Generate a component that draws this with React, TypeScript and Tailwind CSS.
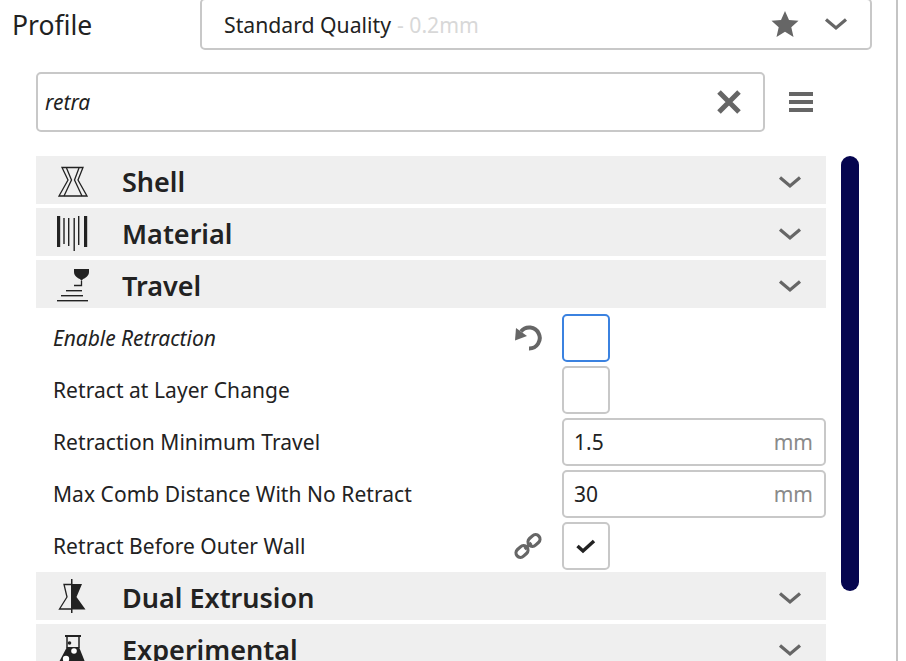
import React from 'react';

const font = { fontFamily: '"Noto Sans", sans-serif' };

const Chevron = ({ className = '' }: { className?: string }) => (
  <svg width="24" height="14" viewBox="0 0 24 14" className={className}>
    <path d="M2 2.500 L12 11 L22 2.500" fill="none" stroke="#666" strokeWidth="3.200" />
  </svg>
);

const ShellIcon = () => (
  <svg width="32" height="36" viewBox="0 0 32 36" fill="none" stroke="#222" strokeWidth="1.300" className="mt-[3px]">
    <path d="M6 3.500 H27 L22 16 L31 32 H3 L12 16 Z" />
    <path d="M10.500 4 L15.500 16 L8 32 M23 4 L18.500 16 L26 32" />
  </svg>
);

const MaterialIcon = () => (
  <svg width="32" height="38" viewBox="0 0 32 38" className="mt-[2px]">
    <rect x="1" y="2" width="3.200" height="31" fill="#222" />
    <rect x="7.300" y="4" width="1.400" height="26" fill="#222" />
    <rect x="12" y="4" width="1.400" height="28" fill="#222" />
    <rect x="17.500" y="4" width="1.400" height="33" fill="#222" />
    <rect x="22" y="2" width="1.400" height="29" fill="#222" />
    <rect x="28" y="2" width="3.200" height="31" fill="#222" />
  </svg>
);

const TravelIcon = () => (
  <svg width="34" height="36" viewBox="0 0 34 36">
    <path d="M18 3 H33 V6 C33 10 29 12.500 27 13 L25.500 15 L24 13 C22 12.500 18 10 18 6 Z" fill="#222" />
    <path d="M25.500 15 V19.500 H18" fill="none" stroke="#222" strokeWidth="1.300" />
    <rect x="10" y="24" width="16" height="1.400" fill="#222" />
    <rect x="5" y="29" width="22" height="1.400" fill="#222" />
    <rect x="1" y="34" width="31" height="1.400" fill="#222" />
  </svg>
);

const DualIcon = () => (
  <svg width="32" height="36" viewBox="0 0 32 36">
    <path d="M16 6.500 H8 L11 19 L3.500 31 H16" fill="none" stroke="#222" strokeWidth="1.300" />
    <path d="M16 6 H26 L20.500 19 L29.500 31.500 H16 Z" fill="#222" />
    <rect x="15" y="1" width="1.500" height="34" fill="#222" />
  </svg>
);

const ExperimentalIcon = () => (
  <svg width="32" height="40" viewBox="0 0 32 40">
    <rect x="9" y="7" width="16" height="2" fill="#222" />
    <path d="M11 8 V20 M23 8 V20" stroke="#222" strokeWidth="1.500" />
    <path d="M11 19 L3 34 C2 37 3 40 5 40 H27 C29 40 30 37 29 34 L23 19 Z" fill="#222" />
    <circle cx="13.500" cy="15" r="1.800" fill="#222" />
    <circle cx="18" cy="23" r="2.800" fill="#fff" />
    <circle cx="10" cy="31" r="3.200" fill="#fff" />
  </svg>
);

const categories = {
  shell: { name: 'Shell', icon: <ShellIcon /> },
  material: { name: 'Material', icon: <MaterialIcon /> },
  travel: { name: 'Travel', icon: <TravelIcon /> },
  dual: { name: 'Dual Extrusion', icon: <DualIcon /> },
  experimental: { name: 'Experimental', icon: <ExperimentalIcon /> },
};

const Category = ({ id }: { id: keyof typeof categories }) => (
  <div className="h-12 shrink-0 bg-[#efefef] flex items-center">
    <div className="w-[72px] pl-5 flex items-center justify-start">{categories[id].icon}</div>
    <span className="flex-1 pl-[14px] pt-[4px] text-[27px] font-semibold text-[#222]">{categories[id].name}</span>
    <Chevron className="mr-6 mt-[4px]" />
  </div>
);

const Checkbox = ({ focused, checked }: { focused?: boolean; checked?: boolean }) => (
  <div
    className={`w-12 h-12 rounded-[5px] border-2 bg-white flex items-center justify-center ${
      focused ? 'border-[#3b82e0]' : 'border-[#c8c8c8]'
    }`}
  >
    {checked && (
      <svg width="20" height="16" viewBox="0 0 20 16">
        <path d="M1.500 8 L7 13 L18 3" fill="none" stroke="#222" strokeWidth="3.500" />
      </svg>
    )}
  </div>
);

const NumberField = ({ value }: { value: string }) => (
  <div className="w-[264px] h-12 rounded-[5px] border-2 border-[#c8c8c8] bg-white flex items-center justify-between pl-[10px] pr-[11px] pt-[1px] text-[21px]">
    <span className="text-[#222]">{value}</span>
    <span className="text-[#8a8a8a]">mm</span>
  </div>
);

const ResetIcon = () => (
  <svg width="30" height="30" viewBox="0 0 30 30">
    <path d="M8 8.500 A10.500 10.500 0 1 1 16 25.500" fill="none" stroke="#666" strokeWidth="4" />
    <path d="M2 17.500 L3 5 L14 13 Z" fill="#666" />
  </svg>
);

const LinkIcon = () => (
  <svg width="30" height="30" viewBox="0 0 30 30" fill="none" stroke="#666" strokeWidth="3.200">
    <rect x="14.500" y="5" width="13" height="9" rx="4.500" transform="rotate(-42 21 9.500)" />
    <rect x="2.500" y="16" width="13" height="9" rx="4.500" transform="rotate(-42 9 20.500)" />
    <path d="M11.500 18 L18.500 12" />
  </svg>
);

const SettingRow = ({
  label,
  italic,
  icon,
  children,
}: {
  label: string;
  italic?: boolean;
  icon?: React.ReactNode;
  children: React.ReactNode;
}) => (
  <div className="h-12 flex items-center">
    <span className={`flex-1 pl-[17px] pt-[2px] text-[21px] text-[#222] ${italic ? 'italic tracking-[-0.05px]' : 'tracking-[0.05px]'}`}>
      {label}
    </span>
    <div className="w-[30px] mr-[19px] flex justify-center">{icon}</div>
    <div className="w-[264px]">{children}</div>
  </div>
);

export default function App() {
  return (
    <div className="h-[661px] w-[906px] overflow-hidden bg-white flex" style={font}>
      <div className="w-[898px] shrink-0 border-r-2 border-[#c4c4c4]">
        <div className="flex items-center pl-3 -mt-[2px]">
          <span className="w-[188px] text-[26.500px] text-[#222] pt-[4px]">Profile</span>
          <div className="w-[672px] h-[52px] rounded-[5px] border-2 border-[#c8c8c8] flex items-center pl-[22px] pr-[22px]">
            <span className="text-[21.200px] text-[#222] pt-[1px]">Standard Quality</span>
            <span className="text-[21.200px] text-[#d8d8d8] ml-[6px] pt-[1px] flex-1">- 0.2mm</span>
            <svg width="28" height="28" viewBox="0 0 28 28" className="mr-[25px]">
              <path d="M14 1 L18 10 L27.500 10.800 L20.300 17.200 L22.500 27 L14 21.800 L5.500 27 L7.700 17.200 L0.500 10.800 L10 10 Z" fill="#666" />
            </svg>
            <Chevron />
          </div>
        </div>

        <div className="flex items-center mt-[22px] pl-9">
          <div className="w-[729px] h-[60px] rounded-[5px] border-2 border-[#c8c8c8] flex items-center justify-between pl-[7px] pr-[21px]">
            <span className="text-[21px] italic text-[#222] pt-[2px]">retra</span>
            <svg width="26" height="26" viewBox="0 0 26 26">
              <path d="M3 3 L23 23 M23 3 L3 23" stroke="#666" strokeWidth="5" />
            </svg>
          </div>
          <div className="ml-6 flex flex-col gap-1">
            <div className="w-6 h-[4px] bg-[#666]" />
            <div className="w-6 h-[4px] bg-[#666]" />
            <div className="w-6 h-[4px] bg-[#666]" />
          </div>
        </div>

        <div className="flex pl-9 mt-6">
          <div className="w-[790px] shrink-0 flex flex-col">
            <div className="flex flex-col gap-1">
              <Category id="shell" />
              <Category id="material" />
              <Category id="travel" />
            </div>
            <div className="flex flex-col gap-1 pt-[6px] pb-[2px]">
              <SettingRow label="Enable Retraction" italic icon={<ResetIcon />}>
                <Checkbox focused />
              </SettingRow>
              <SettingRow label="Retract at Layer Change">
                <Checkbox />
              </SettingRow>
              <SettingRow label="Retraction Minimum Travel">
                <NumberField value="1.5" />
              </SettingRow>
              <SettingRow label="Max Comb Distance With No Retract">
                <NumberField value="30" />
              </SettingRow>
              <SettingRow label="Retract Before Outer Wall" icon={<LinkIcon />}>
                <Checkbox checked />
              </SettingRow>
            </div>
            <div className="flex flex-col gap-1">
              <Category id="dual" />
              <Category id="experimental" />
            </div>
          </div>
          <div className="ml-[15px] w-[18px] h-[435px] rounded-[9px] bg-[#05054f]" />
        </div>
      </div>
    </div>
  );
}
